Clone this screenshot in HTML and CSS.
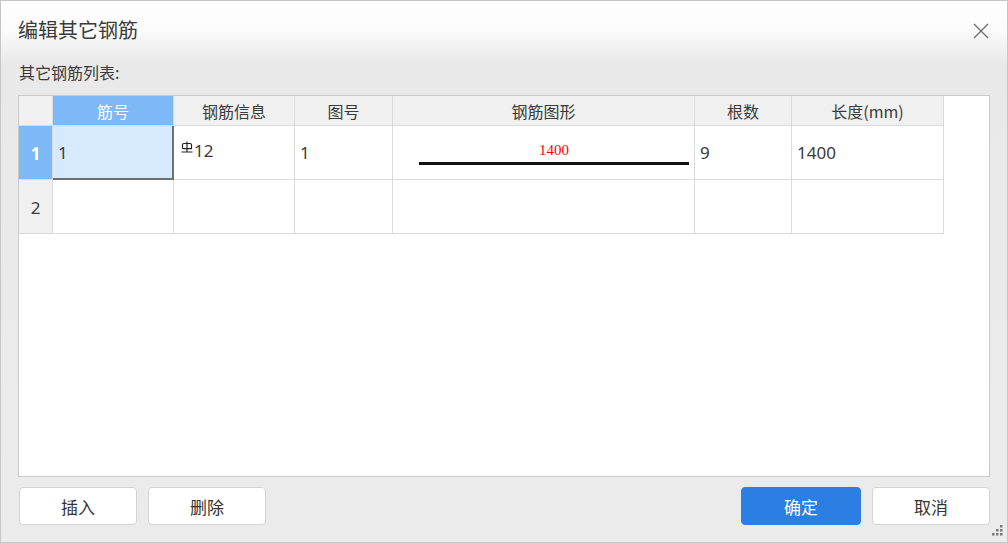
FILE: index.html
```html
<!DOCTYPE html>
<html lang="zh-CN">
<head>
    <meta charset="UTF-8">
    <title>编辑其它钢筋</title>
    <link rel="stylesheet" href="styles.css">
</head>
<body>
    <div class="dialog">
        <div class="titlebar">
            <div class="title">编辑其它钢筋</div>
            <div class="close">
                <svg width="16" height="16" viewBox="0 0 16 16"><path d="M1 1L15 15M15 1L1 15" stroke="#6b6b6b" stroke-width="1.3"/></svg>
            </div>
        </div>
        <div class="list-label">其它钢筋列表:</div>

        <div class="grid-frame">
            <div class="grid">
                <!-- header -->
                <div class="hd corner"></div>
                <div class="hd active">筋号</div>
                <div class="hd">钢筋信息</div>
                <div class="hd">图号</div>
                <div class="hd">钢筋图形</div>
                <div class="hd">根数</div>
                <div class="hd">长度(mm)</div>

                <!-- row 1 -->
                <div class="rh active">1</div>
                <div class="cell selected">1</div>
                <div class="cell info">
                    <svg class="grade" width="12" height="12" viewBox="0 0 12 12"><path d="M6 0.5V11M1.5 7.6V3.8Q1.5 2.5 2.8 2.5H9.2Q10.5 2.5 10.5 3.8V7.6H1.5M0.5 11H11.5" fill="none" stroke="#222" stroke-width="1.15"/></svg>12
                </div>
                <div class="cell">1</div>
                <div class="cell shape">
                    <div class="shape-len">1400</div>
                    <div class="shape-bar"></div>
                </div>
                <div class="cell">9</div>
                <div class="cell">1400</div>

                <!-- row 2 -->
                <div class="rh">2</div>
                <div class="cell"></div>
                <div class="cell"></div>
                <div class="cell"></div>
                <div class="cell"></div>
                <div class="cell"></div>
                <div class="cell"></div>
            </div>
        </div>

        <div class="footer">
            <div class="btn-group">
                <button class="btn">插入</button>
                <button class="btn">删除</button>
            </div>
            <div class="btn-group">
                <button class="btn primary">确定</button>
                <button class="btn">取消</button>
            </div>
        </div>

        <svg class="grip" width="14" height="14" viewBox="0 0 14 14">
            <rect x="10" y="0" width="2.5" height="2.5" fill="#7a7a7a"/>
            <rect x="6" y="4" width="2.5" height="2.5" fill="#7a7a7a"/>
            <rect x="10" y="4" width="2.5" height="2.5" fill="#7a7a7a"/>
            <rect x="2" y="8" width="2.5" height="2.5" fill="#7a7a7a"/>
            <rect x="6" y="8" width="2.5" height="2.5" fill="#7a7a7a"/>
            <rect x="10" y="8" width="2.5" height="2.5" fill="#7a7a7a"/>
        </svg>
    </div>
</body>
</html>
```

FILE: styles.css
```css
body {
    margin: 0;
    padding: 0;
    font-family: "Noto Sans", "Noto Sans CJK SC", sans-serif;
    color: #333;
}
.dialog {
    position: relative;
    width: 1008px;
    height: 543px;
    box-sizing: border-box;
    border: 1px solid #c6c6c6;
    background: linear-gradient(to bottom, #ffffff 0px, #fbfbfb 30px, #e9e9e9 62px, #ebebeb 100%);
    padding: 0 17px;
    display: flex;
    flex-direction: column;
}
.titlebar {
    height: 57px;
    display: flex;
    justify-content: space-between;
    align-items: center;
}
.title {
    font-family: "Noto Sans CJK SC", sans-serif;
    font-size: 20px;
    color: #3a3a3a;
}
.close {
    width: 16px;
    height: 16px;
    margin-right: 1px;
    margin-top: 2px;
}
.close svg {
    display: block;
}
.list-label {
    font-family: "Noto Sans CJK SC", sans-serif;
    font-size: 16px;
    line-height: 28px;
    height: 28px;
    margin-left: 1px;
    color: #3a3a3a;
}
.grid-frame {
    margin-top: 9px;
    height: 382px;
    box-sizing: border-box;
    border: 1px solid #c9c9c9;
    background-color: #fff;
}
.grid {
    display: grid;
    grid-template-columns: 34px 121px 121px 98px 302px 97px 152px;
    grid-template-rows: 30px 54px 54px;
}
.grid > div {
    box-sizing: border-box;
    border-right: 1px solid #dadada;
    border-bottom: 1px solid #dadada;
}
.hd {
    background-color: #f0f0f0;
    font-family: "Noto Sans CJK SC", sans-serif;
    font-size: 16px;
    color: #3a3a3a;
    display: flex;
    align-items: center;
    justify-content: center;
}
.hd.active {
    background-color: #7cb9f6;
    color: #fff;
}
.rh {
    background-color: #f0f0f0;
    font-size: 17px;
    color: #3a3a3a;
    display: flex;
    align-items: center;
    justify-content: center;
    padding-top: 2px;
}
.rh.active {
    background-color: #7cb9f6;
    color: #fff;
    font-weight: bold;
}
.cell {
    font-size: 17px;
    color: #3a3a3a;
    display: flex;
    align-items: center;
    padding-left: 5px;
}
.cell.selected {
    background-color: #d6e9fd;
    border-right: 2px solid #6f6f6f !important;
    border-bottom: 2px solid #6f6f6f !important;
    padding-top: 1px;
}
.cell.info {
    padding-left: 7px;
    padding-bottom: 5px;
}
.grade {
    margin-right: 1px;
    margin-bottom: 6px;
}
.cell.shape {
    flex-direction: column;
    align-items: flex-start;
    justify-content: flex-start;
    padding-left: 26px;
    padding-top: 15px;
}
.shape-len {
    width: 270px;
    text-align: center;
    font-family: "Liberation Serif", serif;
    font-size: 15px;
    line-height: 18px;
    color: #ff0000;
}
.shape-bar {
    width: 270px;
    height: 3px;
    margin-top: 3px;
    background-color: #111;
}
.footer {
    margin-top: 10px;
    display: flex;
    justify-content: space-between;
}
.btn-group {
    display: flex;
    gap: 11px;
    margin-left: 1px;
}
.btn {
    width: 118px;
    height: 38px;
    background-color: #fff;
    border: 1px solid #d4d4d4;
    border-radius: 4px;
    font-family: "Noto Sans CJK SC", sans-serif;
    font-size: 17px;
    color: #333;
    padding: 0;
}
.btn.primary {
    width: 120px;
    background-color: #2b7fe2;
    border-color: #2b7fe2;
    color: #fff;
}
.grip {
    position: absolute;
    right: 3px;
    bottom: 3px;
}
```
